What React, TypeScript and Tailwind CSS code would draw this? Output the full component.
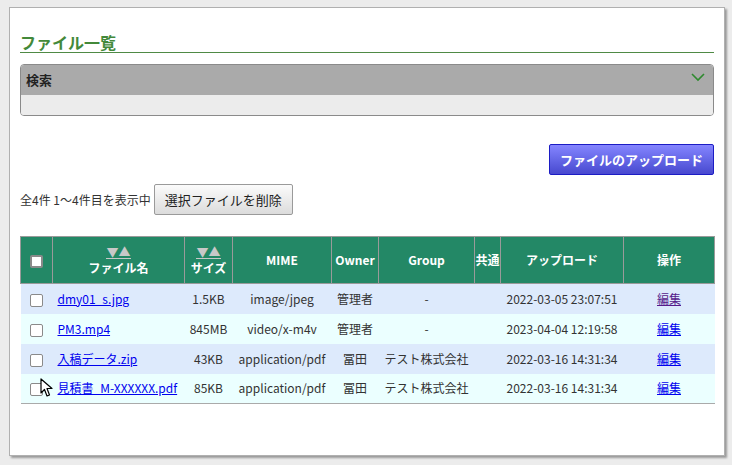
const FONT = { fontFamily: '"Noto Sans CJK JP", "Noto Sans", sans-serif' };

type Row = {
  name: string;
  size: string;
  mime: string;
  owner: string;
  group: string;
  uploaded: string;
  visited?: boolean;
};

const rows: Row[] = [
  { name: "dmy01_s.jpg", size: "1.5KB", mime: "image/jpeg", owner: "管理者", group: "-", uploaded: "2022-03-05 23:07:51", visited: true },
  { name: "PM3.mp4", size: "845MB", mime: "video/x-m4v", owner: "管理者", group: "-", uploaded: "2023-04-04 12:19:58" },
  { name: "入稿データ.zip", size: "43KB", mime: "application/pdf", owner: "冨田", group: "テスト株式会社", uploaded: "2022-03-16 14:31:34" },
  { name: "見積書_M-XXXXXX.pdf", size: "85KB", mime: "application/pdf", owner: "冨田", group: "テスト株式会社", uploaded: "2022-03-16 14:31:34" },
];

const Box = ({ head = false }: { head?: boolean }) => (
  <span
    className={`inline-block w-[13px] h-[13px] rounded-[2px] align-middle ${
      head ? "bg-white border-2 border-[#8a8a8a]" : "bg-white border-[1.5px] border-[#8a8a8a]"
    }`}
  />
);

const Sort = () => (
  <span className="inline-block text-[12px] leading-[13px] text-[#c8c8c8] border-b border-[#c8c8c8]">▼▲</span>
);

const Cursor = () => (
  <svg className="absolute left-[40px] top-[378px]" width="14" height="20" viewBox="0 0 14 20">
    <path d="M1 1 L1 15 L4.5 11.5 L7 18 L9.5 17 L7 10.5 L12 10.5 Z" fill="#fff" stroke="#000" strokeWidth="1.2" strokeLinejoin="round" />
  </svg>
);

export default function App() {
  return (
    <div className="relative w-[732px] h-[465px] bg-[#ececec] pt-[7px] pl-[9px]" style={FONT}>
      <div className="w-[716px] h-[449px] bg-white border border-[#b0b0b0] shadow-[2px_2px_2px_rgba(0,0,0,0.35)] px-[10px] pt-[24px]">
        <h2 className="text-[16px] leading-[20px] font-bold text-[#43893a] border-b border-[#4f8a45]">ファイル一覧</h2>

        <div className="mt-[11px] border border-[#8a8a8a] rounded-[4px] overflow-hidden">
          <div className="h-[30px] bg-[#aaaaaa] flex items-center justify-between pl-[5px] pr-[8px]">
            <span className="text-[13px] font-bold text-[#222]">検索</span>
            <svg width="14" height="9" viewBox="0 0 14 9" className="-mt-[5px]">
              <path d="M1 1 L7 7 L13 1" fill="none" stroke="#2f8a2f" strokeWidth="1.6" />
            </svg>
          </div>
          <div className="h-[20px] bg-[#ececec]" />
        </div>

        <div className="mt-[28px] flex justify-end">
          <button className="w-[165px] h-[31px] rounded-[2px] border border-[#1c1cc4] bg-gradient-to-b from-[#8585ff] to-[#4848cf] text-white text-[13px] font-bold">
            ファイルのアップロード
          </button>
        </div>

        <div className="mt-[9px] flex items-center text-[12px] text-[#333]">
          <span>全4件 1〜4件目を表示中</span>
          <button className="ml-[3px] w-[139px] h-[31px] rounded-[2px] border border-[#9a9a9a] bg-gradient-to-b from-[#fbfbfb] to-[#dcdcdc] text-[13px] text-[#222]">
            選択ファイルを削除
          </button>
        </div>

        <table className="mt-[21px] w-[694px] table-fixed border-collapse text-[12px] text-[#333]">
          <colgroup>
            <col className="w-[32px]" />
            <col className="w-[132px]" />
            <col className="w-[48px]" />
            <col className="w-[99px]" />
            <col className="w-[47px]" />
            <col className="w-[96px]" />
            <col className="w-[26px]" />
            <col className="w-[123px]" />
            <col className="w-[91px]" />
          </colgroup>
          <thead>
            <tr className="h-[47px] bg-[#238866] text-white font-bold text-[12px]">
              <th className="border border-[#9a9a9a]"><Box head /></th>
              <th className="border border-[#9a9a9a] leading-[16px]">
                <Sort />
                <div>ファイル名</div>
              </th>
              <th className="border border-[#9a9a9a] leading-[16px] px-0">
                <Sort />
                <div>サイズ</div>
              </th>
              <th className="border border-[#9a9a9a]">MIME</th>
              <th className="border border-[#9a9a9a]">Owner</th>
              <th className="border border-[#9a9a9a]">Group</th>
              <th className="border border-[#9a9a9a] px-0 whitespace-nowrap">共通</th>
              <th className="border border-[#9a9a9a]">アップロード</th>
              <th className="border border-[#9a9a9a]">操作</th>
            </tr>
          </thead>
          <tbody>
            {rows.map((r, i) => (
              <tr key={r.name} className={`h-[30px] ${i % 2 === 0 ? "bg-[#ddeafc]" : "bg-[#ebffff]"} ${i === rows.length - 1 ? "border-b border-[#aaaaaa]" : ""}`}>
                <td className="text-center"><Box /></td>
                <td className="pl-[5px] whitespace-nowrap">
                  <a href="#" className="text-[#0000ee] underline">{r.name}</a>
                </td>
                <td className="text-center">{r.size}</td>
                <td className="text-center whitespace-nowrap">{r.mime}</td>
                <td className="text-center whitespace-nowrap">{r.owner}</td>
                <td className="text-center whitespace-nowrap">{r.group}</td>
                <td />
                <td className="text-center whitespace-nowrap">{r.uploaded}</td>
                <td className="text-center">
                  <a href="#" className={`underline ${r.visited ? "text-[#551a8b]" : "text-[#0000ee]"}`}>編集</a>
                </td>
              </tr>
            ))}
          </tbody>
        </table>
      </div>
      <Cursor />
    </div>
  );
}
